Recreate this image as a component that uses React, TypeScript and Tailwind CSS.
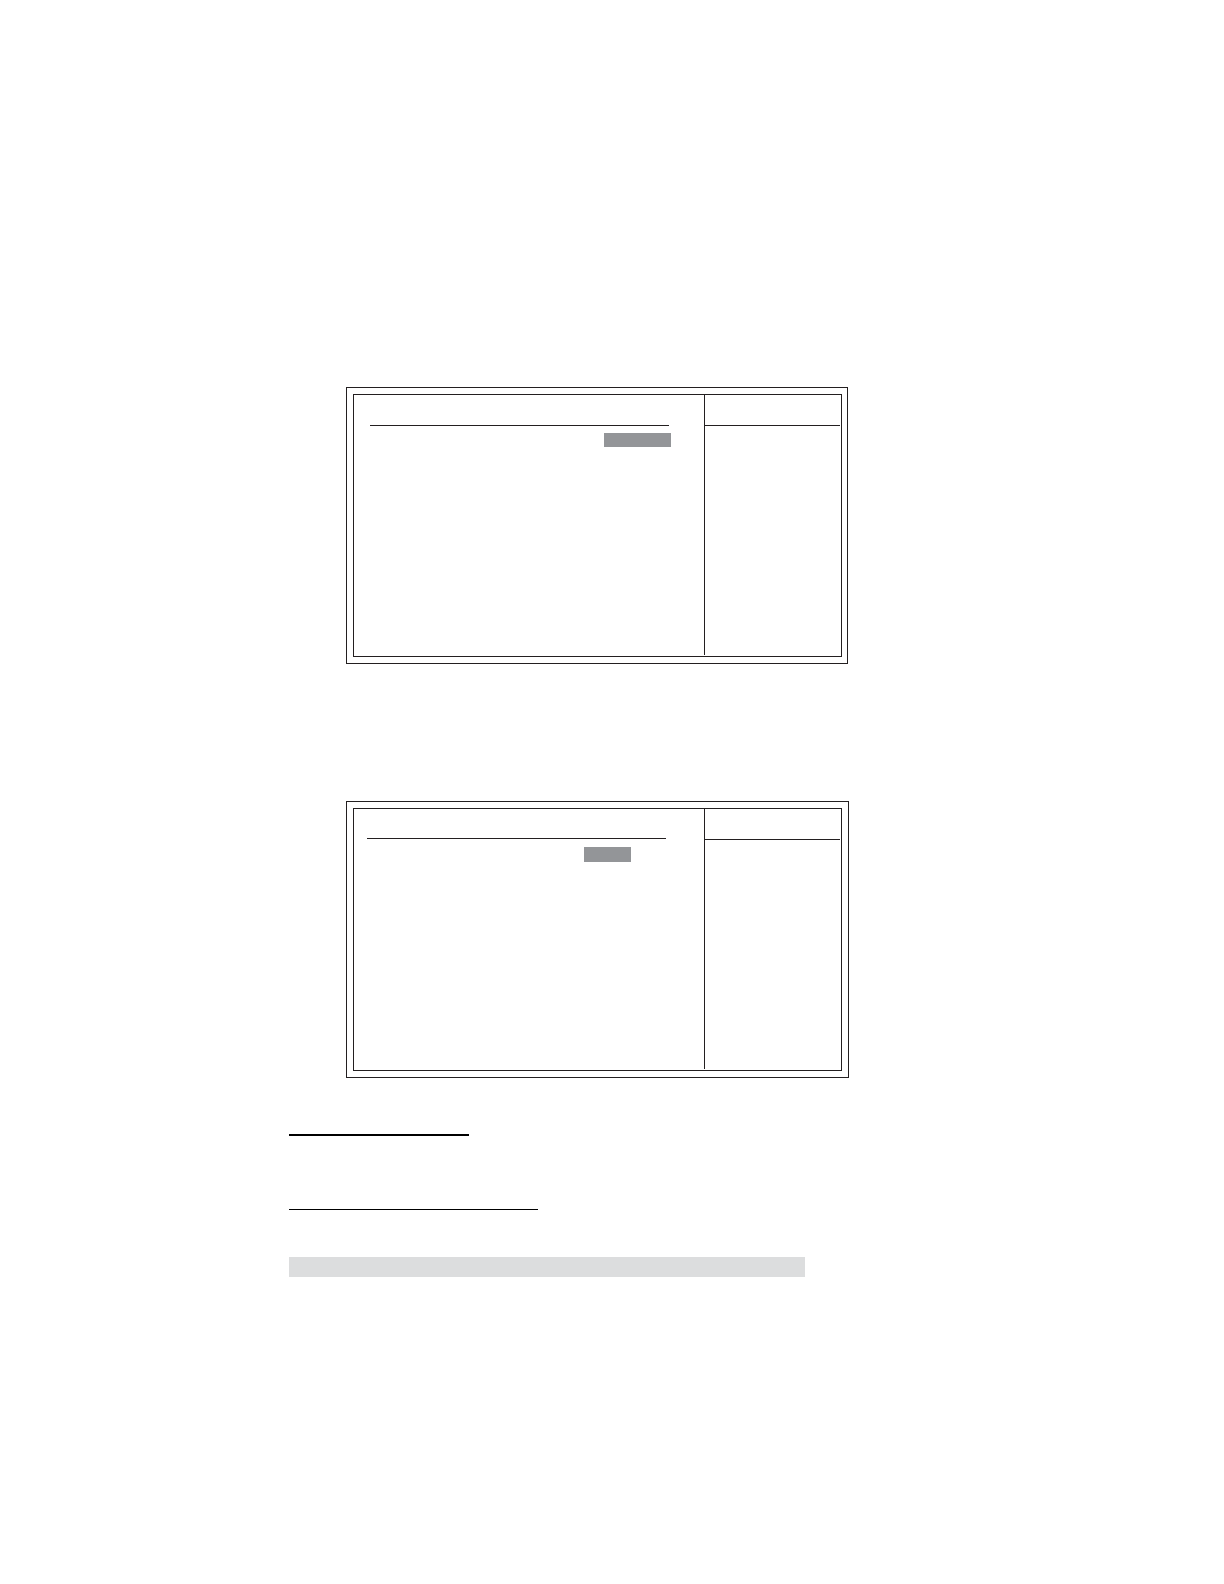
import clsx from 'clsx'

interface SetupScreenProps {
  label: string
  frameClass: string
  ruleClass: string
  fieldClass: string
}

// Double-framed setup screen: item list on the left, help column on the right
function SetupScreen({ label, frameClass, ruleClass, fieldClass }: SetupScreenProps) {
  return (
    <section
      aria-label={label}
      className={clsx('ml-[57px] border border-[#231f20] py-1.5 pl-1.5', frameClass)}
    >
      <div className="flex min-h-[263px] border border-[#231f20]">
        <div className="flex-1">
          <hr className={clsx('w-[299px] border-t border-[#231f20]', ruleClass)} />
          <div className={clsx('bg-[#939598]', fieldClass)} />
        </div>
        <aside className="mb-px w-[137px] border-l border-[#231f20] pr-px pt-[30px]">
          <hr className="border-t border-[#231f20]" />
        </aside>
      </div>
    </section>
  )
}

export default function App() {
  return (
    <div className="min-h-screen bg-white">
      <main className="mx-auto flex max-w-[646px] flex-col pt-[387px]">
        <SetupScreen
          label="Setup menu"
          frameClass="max-w-[502px] pr-[5px]"
          ruleClass="ml-4 mt-[30px]"
          fieldClass="ml-[250px] mt-[7px] h-3.5 w-[67px]"
        />

        <div className="mt-[137px]">
          <SetupScreen
            label="Setup submenu"
            frameClass="max-w-[503px] pr-1.5"
            ruleClass="ml-[13px] mt-[29px]"
            fieldClass="ml-[230px] mt-2 h-[15px] w-[47px]"
          />
        </div>

        {/* Section rules */}
        <hr className="mt-14 w-[180px] border-t-2 border-black" />
        <hr className="mt-[73px] w-[249px] border-t border-black" />

        {/* Shaded row */}
        <div className="mt-[47px] h-5 w-full max-w-[516px] bg-[#dcddde]" />
      </main>
    </div>
  )
}
